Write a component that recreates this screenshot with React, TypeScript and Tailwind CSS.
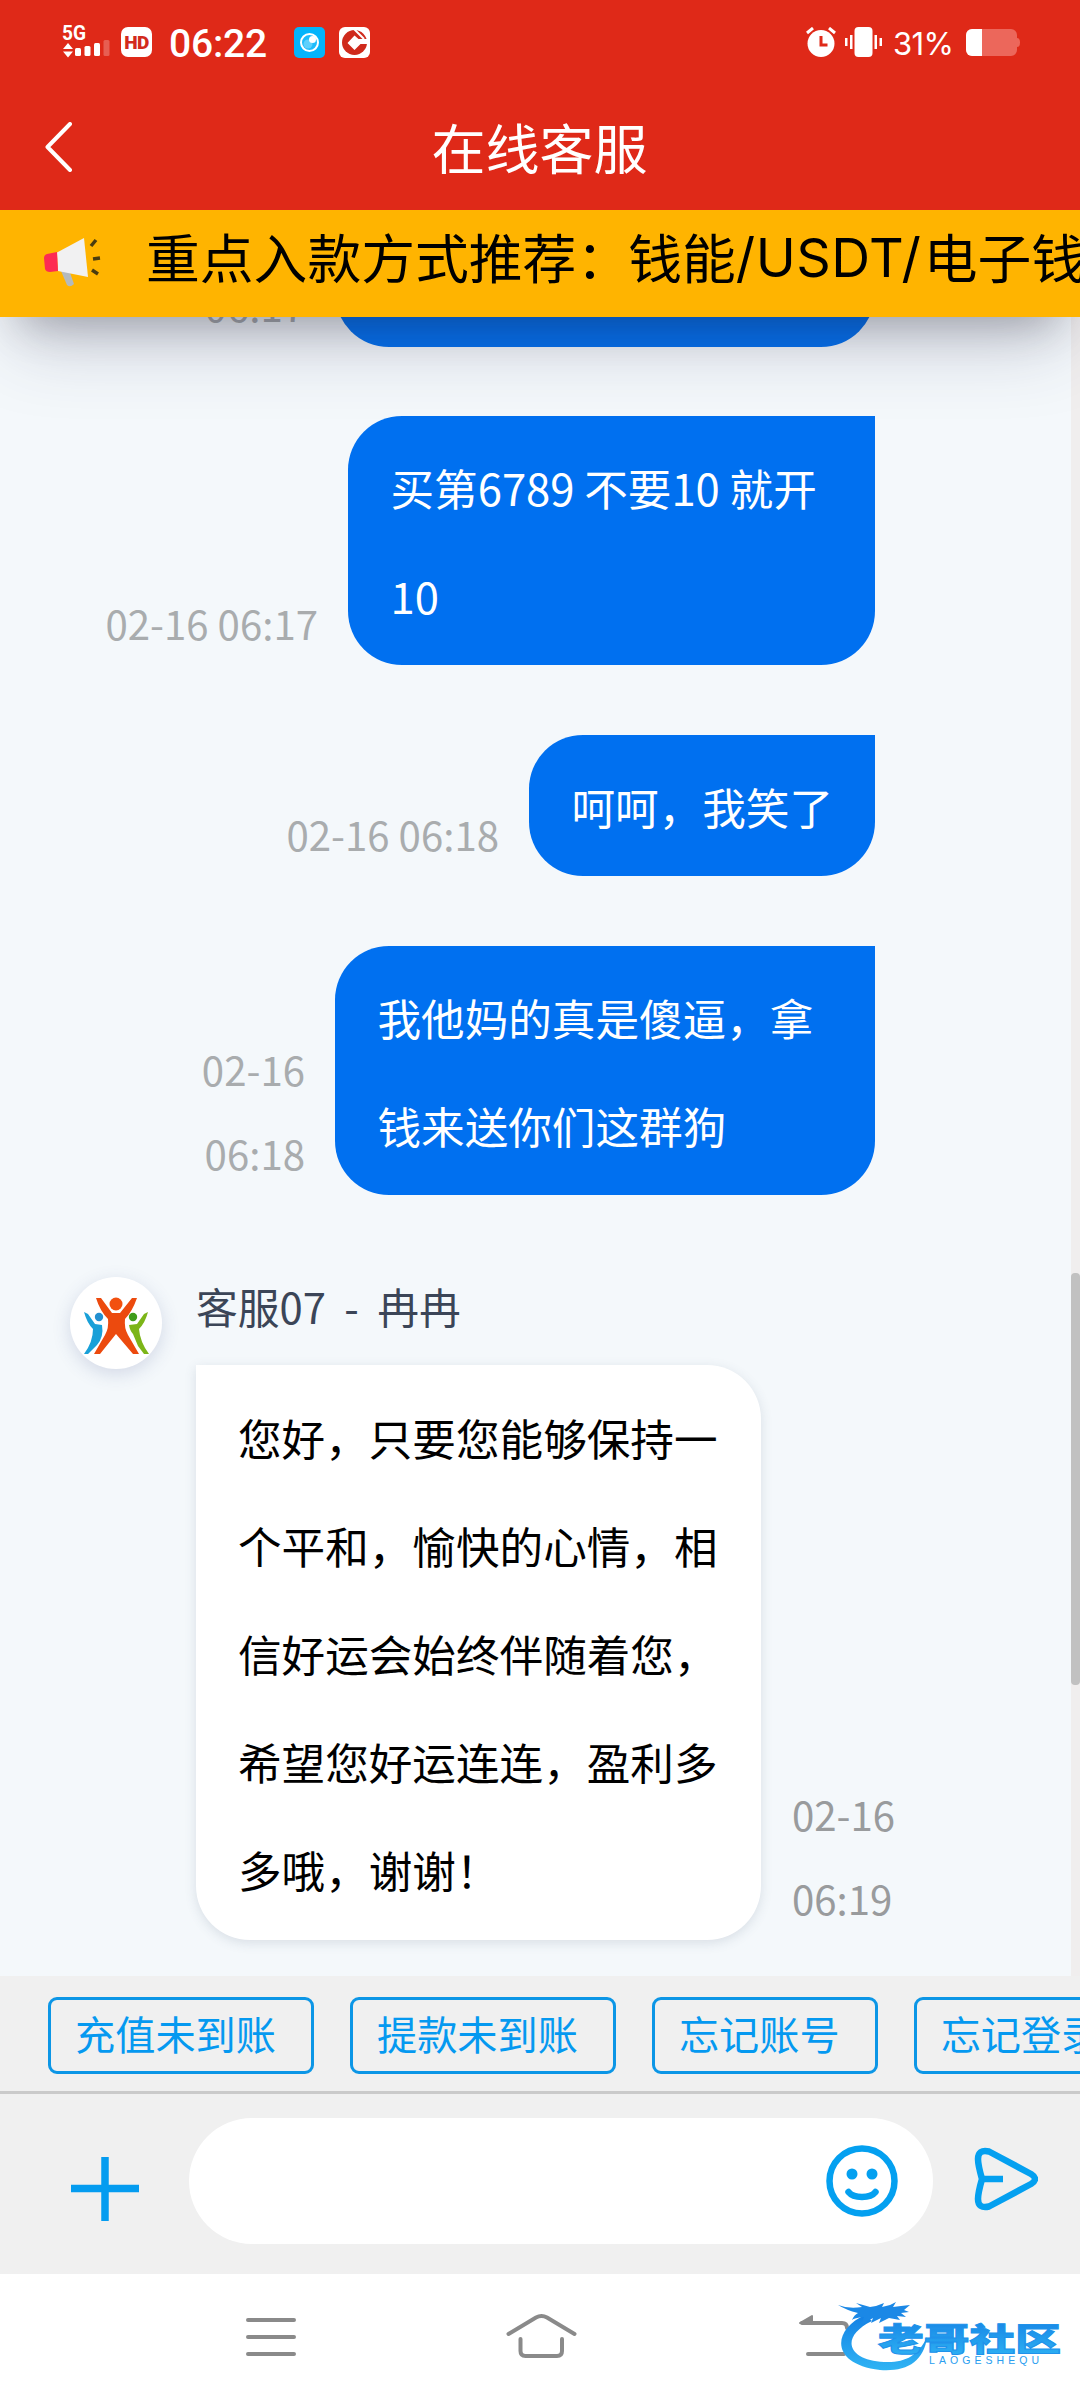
import type { ReactNode } from 'react';

// ─── Data ──────────────────────────────────────────────

const replies = [
  { time: '02-16 06:17', lines: ['买第6789 不要10 就开', '10'], width: 'w-[527px]' },
  { time: '02-16 06:18', lines: ['呵呵，我笑了'], width: 'w-[346px]' },
  { time: '02-16 06:18', lines: ['我他妈的真是傻逼，拿', '钱来送你们这群狗'], width: 'w-[540px]', wrapTime: true },
];

const agentLines = [
  '您好，只要您能够保持一',
  '个平和，愉快的心情，相',
  '信好运会始终伴随着您，',
  '希望您好运连连，盈利多',
  '多哦，谢谢！',
];

const quickReplies = ['充值未到账', '提款未到账', '忘记账号', '忘记登录密码'];

// ─── Status Bar ────────────────────────────────────────

function StatusBar() {
  return (
    <div className="flex h-[84px] items-center justify-between pr-[60px] pl-[62px]">
      <div className="flex items-center">
        <svg width="50" height="36" viewBox="0 0 50 36" className="mr-[9px] overflow-visible" fill="#fff">
          <text x="0" y="16" fontSize="21" fontWeight="700" fontFamily="Roboto, sans-serif" textLength="24" lengthAdjust="spacingAndGlyphs">5G</text>
          <path d="M1 25l5-6 5 6zM1 27.500l5 6 5-6z" />
          <rect x="13" y="24" width="6" height="8" rx="1.500" />
          <rect x="22.500" y="22" width="6" height="10" rx="1.500" />
          <rect x="32" y="19" width="6" height="13" rx="1.500" />
          <rect x="41.500" y="16" width="6" height="16" rx="1.500" opacity="0.250" />
        </svg>
        <div className="flex h-[30px] w-[31px] items-center justify-center rounded-[7px] bg-white font-['Roboto',sans-serif] text-[19px] leading-none font-black tracking-[-0.5px] text-[#d22a1c]">
          HD
        </div>
        <span className="ml-[17px] w-[101px] pt-[4px] font-['Roboto','Noto_Sans',sans-serif] text-[39px] leading-[44px] font-medium tracking-[-0.2px] whitespace-nowrap text-white">
          06:22
        </span>
        <svg width="31" height="31" viewBox="0 0 31 31" className="ml-[24px]">
          <rect width="31" height="31" rx="5" fill="#04b4fb" />
          <circle cx="15.500" cy="15.500" r="8.500" fill="#1fbcfb" stroke="#fff" strokeWidth="2" />
          <circle cx="14" cy="17" r="4.500" fill="#5fd0fc" />
          <circle cx="18.500" cy="12.500" r="3.500" fill="#fff" />
        </svg>
        <svg width="31" height="31" viewBox="0 0 31 31" className="ml-[14px]">
          <rect width="31" height="31" rx="6" fill="#fff" />
          <circle cx="15.500" cy="15.500" r="12.500" fill="#cf2a1c" />
          <path d="M15.500 8.500l4 3.500H31v5H21.500l-6 6-7-7z" fill="#fff" />
          <path d="M15 2l10 10" stroke="#fff" strokeWidth="2" />
        </svg>
      </div>
      <div className="flex items-center">
        <svg width="30" height="30" viewBox="0 0 30 30">
          <circle cx="15" cy="16.500" r="13.500" fill="#fff" />
          <path d="M1 6l6-5M29 6l-6-5" stroke="#fff" strokeWidth="3" />
          <path d="M15 9v9h6.500" fill="none" stroke="#df2918" strokeWidth="3" />
        </svg>
        <svg width="37" height="30" viewBox="0 0 37 30" className="ml-[9px]" fill="#fff">
          <rect x="9.500" width="18" height="30" rx="4" />
          <path d="M5 8h2.500v14H5zM0 11h2.500v8H0zM29.500 8H32v14h-2.500zM34.500 11H37v8h-2.500z" />
        </svg>
        <span className="ml-[11px] w-[62px] pt-[2px] font-['Inter','Noto_Sans',sans-serif] text-[31px] leading-none tracking-[-0.6px] whitespace-nowrap text-white">
          31%
        </span>
        <svg width="54" height="27" viewBox="0 0 54 27" className="ml-[11px]">
          <path d="M6 0h39a6 6 0 0 1 6 6v3q3 0 3 4.500t-3 4.500v3a6 6 0 0 1-6 6H6a6 6 0 0 1-6-6V6a6 6 0 0 1 6-6z" fill="#ec675b" />
          <path d="M6 0h10v27H6a6 6 0 0 1-6-6V6a6 6 0 0 1 6-6z" fill="#fff" />
        </svg>
      </div>
    </div>
  );
}

// ─── Announcement ──────────────────────────────────────

function Announcement() {
  return (
    <div className="relative z-10 flex h-[107px] items-start bg-[#ffb400] pl-[44px] whitespace-nowrap shadow-[0_39px_75px_-15px_rgba(50,50,93,0.25),0_24px_45px_-22px_rgba(0,0,0,0.3)]">
      <svg width="57" height="52" viewBox="0 0 57 52" className="mt-[27px] shrink-0">
        <path d="M17 34l8-1 5 14q-4 4-7 1z" fill="#b4babd" />
        <path d="M13 15.500L40 1l4 39-30-6z" fill="#f1f1f2" />
        <path d="M3 17l10-2 1 19-8 1q-4 0-5-3L0 21q0-3 3-4z" fill="#fd2b52" />
        <path d="M47 9l5-6M49 22l7-1M48 33l6 4" stroke="#4a3c10" strokeWidth="3.500" />
      </svg>
      <span className="ml-[45px] flex text-[53.800px] leading-[92px] text-black">
        <span>重点入款方式推荐</span>
        <span>：</span>
        <span className="-ml-[2px]">钱能</span>
        <span className="w-[188px] pt-[2px] font-['Inter',sans-serif] tracking-[0.5px]">/USDT/</span>
        <span>电子钱包</span>
      </span>
    </div>
  );
}

// ─── Messages ──────────────────────────────────────────

function Time({ value, wrap, className }: { value: string; wrap?: boolean; className: string }) {
  return (
    <div className={`text-[40.200px] leading-[84px] whitespace-nowrap ${className}`}>
      {wrap ? value.split(' ').map((part) => <p key={part}>{part}</p>) : value}
    </div>
  );
}

function Reply({ time, wrapTime, width, children }: { time: string; wrapTime?: boolean; width: string; children: ReactNode }) {
  return (
    <div className="flex items-end justify-end">
      <Time value={time} wrap={wrapTime} className="mr-[30px] text-right text-[#a9acae]" />
      <div className={`${width} rounded-[54px] rounded-tr-none bg-[#0070f0] pt-[16.500px] pb-[16.500px] pl-[42.500px] text-[43.600px] leading-[108px] whitespace-nowrap text-white`}>
        {children}
      </div>
    </div>
  );
}

function Avatar() {
  return (
    <div className="flex h-[92px] w-[92px] shrink-0 items-center justify-center rounded-full bg-white pt-[6px] shadow-[0_5px_18px_rgba(60,80,140,0.18)]">
      <svg width="66" height="58" viewBox="0 0 66 58">
        <circle cx="33" cy="7" r="6.500" fill="#f2500f" />
        <path d="M13 1h5l11 15h8L49 1h5q-5 14-12 21-1 9 3 16l11 19h-6L33 37 17 57h-6l11-19q4-7 3-16Q17 14 13 1z" fill="#ec4a0e" />
        <circle cx="16" cy="20" r="4.200" fill="#2390d0" />
        <path d="M1 15l4 2 7 10 7 1q2 12-5 20l-9 9H1Q10 45 10 32 4 26 1 15z" fill="#19a0d8" />
        <circle cx="50" cy="20" r="4.200" fill="#3f9c1c" />
        <path d="M65 15l-4 2-7 10-8 1q1 6 4 9l5 12 6 8h5Q57 45 56 32q6-6 9-17z" fill="#7cb518" />
      </svg>
    </div>
  );
}

function ChatLog() {
  return (
    <main className="flex h-[1659px] bg-[#f4f8fb]">
      <div className="flex h-full flex-col overflow-hidden">
        {/* tail of the message scrolled under the announcement */}
        <div className="mb-[69px] flex h-[30px] w-[875px] shrink-0 items-end justify-end">
          <Time value="06:17" className="mr-[30px] text-right text-[#a9acae]" />
          <div className="h-[120px] w-[540px] rounded-b-[54px] bg-[#0070f0]" />
        </div>

        <div className="flex w-[875px] flex-col gap-[70px]">
          {replies.map((reply) => (
            <Reply key={reply.lines[0]} time={reply.time} wrapTime={reply.wrapTime} width={reply.width}>
              {reply.lines.map((line) => (
                <p key={line}>{line}</p>
              ))}
            </Reply>
          ))}
        </div>

        <div className="mt-[82px] ml-[70px] flex">
          <Avatar />
          <div className="ml-[34px]">
            <p className="h-[88px] text-[41.800px] leading-[58px] [word-spacing:9px] text-[#3b4557]">客服07 - 冉冉</p>
            <div className="flex items-end">
              <div className="w-[565px] shrink-0 rounded-[54px] rounded-tl-none bg-white pt-[17.500px] pb-[17px] pl-[42px] text-[43.600px] leading-[108px] whitespace-nowrap text-black shadow-[0_3px_12px_rgba(60,80,110,0.15)]">
                {agentLines.map((line) => (
                  <p key={line}>{line}</p>
                ))}
              </div>
              <Time value="02-16 06:19" wrap className="ml-[31px] text-[#999b9d]" />
            </div>
          </div>
        </div>
      </div>

      {/* Scrollbar */}
      <div className="ml-auto w-[9px] bg-[#f0eeee] pt-[956px]">
        <div className="h-[412px] rounded-[4px] bg-[#c1c1c1]" />
      </div>
    </main>
  );
}

// ─── Composer ──────────────────────────────────────────

function QuickReplies() {
  return (
    <div className="flex h-[118px] gap-[36px] overflow-hidden border-b-[3px] border-[#cacaca] pt-[21px] pl-[48px]">
      {quickReplies.map((label) => (
        <button
          key={label}
          className="flex h-[77px] shrink-0 rounded-[9px] border-[3px] border-[#0c96e6] pr-[35px] pl-[24px] text-[40.200px] leading-[66px] whitespace-nowrap text-[#0599f0]"
        >
          {label}
        </button>
      ))}
    </div>
  );
}

function Composer() {
  return (
    <div className="flex h-[180px] items-start">
      <svg width="68" height="64" viewBox="0 0 68 64" className="mt-[63px] ml-[71px]">
        <path d="M34 0v64M0 31.500h68" stroke="#049cf0" strokeWidth="7.500" />
      </svg>
      <div className="mt-[24px] ml-[50px] flex h-[126px] w-[744px] items-center justify-end rounded-full bg-white pr-[35px]">
        <svg width="72" height="72" viewBox="0 0 72 72" fill="none" stroke="#04a0f0" strokeWidth="6.500">
          <circle cx="36" cy="36" r="32.500" />
          <circle cx="26" cy="29" r="5.500" fill="#04a0f0" stroke="none" />
          <circle cx="46" cy="29" r="5.500" fill="#04a0f0" stroke="none" />
          <path d="M22.500 47q4 5 13.500 5t13.500-5" strokeLinecap="round" />
        </svg>
      </div>
      <svg width="64" height="64" viewBox="0 0 64 64" className="mt-[53px] ml-[41px]" fill="none" stroke="#04a0f0" strokeWidth="6.500">
        <path d="M15 4.500L57 27q8 5 0 10L15 59.500Q4 62 4 52q0-6 4-20Q4 18 4 12 4 2 15 4.500z" strokeLinejoin="round" />
        <path d="M8 32h21" />
      </svg>
    </div>
  );
}

// ─── System Navigation ─────────────────────────────────

function SystemNav() {
  return (
    <nav className="relative flex h-[126px] items-start bg-white">
      <svg width="50" height="40" viewBox="0 0 50 40" className="mt-[43px] ml-[246px]" stroke="#8a8a8a" strokeWidth="4" strokeLinecap="round">
        <path d="M2 3h46M2 20h46M2 37h46" />
      </svg>
      <svg width="71" height="46" viewBox="0 0 71 46" className="mt-[39px] ml-[210px]" fill="none" stroke="#8a8a8a" strokeWidth="4" strokeLinecap="round">
        <path d="M2.500 21L30 4.500q5.500-3 11 0L68.500 21M14.500 26v12q0 5 5 5H51q5 0 5-5V26" />
      </svg>
      <svg width="70" height="46" viewBox="0 0 70 46" className="mt-[40px] ml-[221px]" fill="none" stroke="#8a8a8a" strokeWidth="4" strokeLinecap="round">
        <path d="M4 9h40q5 0 5 5M10 40h36" />
        <path d="M2 9L14 2v7z" fill="#8a8a8a" strokeWidth="2" strokeLinejoin="round" />
      </svg>

      {/* Community logo laid over the bar */}
      <svg width="230" height="84" viewBox="0 0 230 84" className="absolute top-[20px] left-[836px]">
        <defs>
          <linearGradient id="brand" x1="0" y1="0" x2="0" y2="1">
            <stop offset="0" stopColor="#1480e4" />
            <stop offset="1" stopColor="#2fb4f4" />
          </linearGradient>
        </defs>
        <path d="M29 21C-4 36-6 70 44 76c26 2 44-8 47-33-9 19-22 26-43 25C12 67 3 43 36 27z" fill="url(#brand)" />
        <path d="M2 11q10 4 24 2l-6-4 14 4 6-1 8-3-2 4 8-2 6-3-3 5 8-1 9-1-6 5 5 2-8 1 5 4-9-1 3 4-11-2-10 5 2-5-10 5 2-5-12 7 3-8q-10 1-12 3 2-5 6-7Q10 16 2 11z" fill="#1b88e6" />
        <text x="42" y="57" fontSize="32" fontWeight="900" stroke="#2092ea" strokeWidth="1" fontFamily="'Noto Sans CJK SC', sans-serif" textLength="183" lengthAdjust="spacingAndGlyphs" fill="url(#brand)">老哥社区</text>
        <text x="93" y="70" fontSize="10.500" fontFamily="'Liberation Sans', sans-serif" textLength="110" fill="#2a9ef0">LAOGESHEQU</text>
      </svg>
    </nav>
  );
}

// ─── App ───────────────────────────────────────────────

export default function App() {
  return (
    <div className="h-[2400px] w-[1080px] overflow-hidden bg-[#f0f0f0] font-['Noto_Sans_CJK_SC',sans-serif]">
      <header className="relative z-20 h-[210px] bg-[#df2918]">
        <StatusBar />
        <div className="flex h-[126px] items-center">
          <svg width="28" height="50" viewBox="0 0 28 50" className="ml-[45px]" fill="none" stroke="#fff" strokeWidth="4" strokeLinecap="round" strokeLinejoin="round">
            <path d="M25 2L2.500 25 25 48" />
          </svg>
          <h1 className="mr-[74px] flex-1 text-center text-[54px] leading-[126px] text-white">在线客服</h1>
        </div>
      </header>
      <Announcement />
      <ChatLog />
      <QuickReplies />
      <Composer />
      <SystemNav />
    </div>
  );
}
